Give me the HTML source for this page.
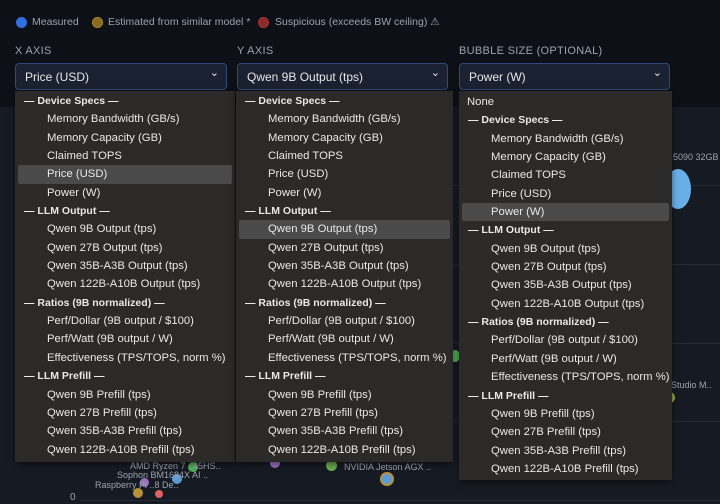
<!DOCTYPE html><html><head><style>
*{margin:0;padding:0;box-sizing:border-box}
body{width:720px;height:504px;background:#0d1117;font-family:"Liberation Sans",sans-serif;color:#e6e6e6;position:relative;overflow:hidden}
.chart{position:absolute;left:0;top:107px;width:720px;height:397px;background:#161b23}
.grid{position:absolute;left:80px;right:0;height:1px;background:#252b35}
.leg{position:absolute;top:16px;font-size:10.5px;color:#9aa3ad}
.dot{position:absolute;width:11px;height:11px;border-radius:50%;top:17px}
.lbl{position:absolute;top:45px;font-size:11px;color:#9aa3ad;letter-spacing:.3px}
.sel{position:absolute;top:63px;height:27px;border:1px solid #2f4a7a;background:#1a2130;border-radius:4px;font-size:12px;color:#e6e6e6;padding:6px 0 0 9px}
.sel:after{content:"⌄";position:absolute;right:7px;top:2px;font-size:11px}
.dd{position:absolute;background:#2b2a29;font-size:11.3px;box-shadow:0 2px 6px rgba(0,0,0,.5)}
.r{height:18.35px;line-height:18.35px;padding-left:32px;white-space:nowrap;color:#e8e8e8}
.h{padding-left:9px;font-weight:bold;font-size:10.5px}
.s{background:#4a4a4a;margin:0 3px;padding-left:29px;border-radius:2px}
.b{position:absolute;border-radius:50%}
.t{position:absolute;font-size:9px;color:#9aa3ad;white-space:nowrap}
</style></head><body>
<div class="chart">
<div class="grid" style="top:78px"></div><div class="grid" style="top:157px"></div><div class="grid" style="top:236px"></div><div class="grid" style="top:314px"></div><div class="grid" style="top:393px"></div>
</div>
<div class="b" style="left:665px;top:169px;width:26px;height:40px;background:#6aaee8"></div>
<div class="t" style="left:673px;top:152px">5090 32GB</div>
<div class="t" style="left:671px;top:380px">Studio M..</div>
<div class="b" style="left:664px;top:392px;width:11px;height:11px;background:#6aa84f;border:1px solid #c8a030"></div>
<div class="b" style="left:450px;top:350px;width:10px;height:12px;background:#4caf50"></div>
<div class="b" style="left:380px;top:472px;width:14px;height:14px;background:#5b9bd5;border:2px solid #b8913a"></div>
<div class="b" style="left:326px;top:460px;width:11px;height:11px;background:#6aa84f"></div>
<div class="b" style="left:270px;top:458px;width:10px;height:10px;background:#9a6fc0"></div>
<div class="b" style="left:188px;top:462px;width:10px;height:10px;background:#4caf50"></div>
<div class="b" style="left:172px;top:474px;width:10px;height:10px;background:#5b9bd5"></div>
<div class="b" style="left:140px;top:478px;width:9px;height:9px;background:#9a6fc0"></div>
<div class="b" style="left:133px;top:488px;width:10px;height:10px;background:#b8913a"></div>
<div class="b" style="left:155px;top:490px;width:8px;height:8px;background:#e06060"></div>
<div class="t" style="left:130px;top:461px">AMD Ryzen 7 ..45HS..</div>
<div class="t" style="left:117px;top:470px">Sophon BM1684X AI ..</div>
<div class="t" style="left:95px;top:480px">Raspberry Pi ..8 De..</div>
<div class="t" style="left:344px;top:462px">NVIDIA Jetson AGX ..</div>
<div class="t" style="left:70px;top:492px;font-size:10px">0</div>

<div class="dot" style="left:16px;background:#2f6fe0"></div><div class="leg" style="left:32px">Measured</div>
<div class="dot" style="left:92px;background:#8a6a1e;border:1px dotted #c9a030"></div><div class="leg" style="left:108px">Estimated from similar model *</div>
<div class="dot" style="left:258px;background:#8a2a2a;border:1px dotted #c04040"></div><div class="leg" style="left:275px">Suspicious (exceeds BW ceiling) ⚠</div>

<div class="lbl" style="left:15px">X AXIS</div>
<div class="lbl" style="left:237px">Y AXIS</div>
<div class="lbl" style="left:459px">BUBBLE SIZE (OPTIONAL)</div>
<div class="sel" style="left:15px;width:212px">Price (USD)</div>
<div class="sel" style="left:237px;width:211px">Qwen 9B Output (tps)</div>
<div class="sel" style="left:459px;width:211px">Power (W)</div>

<div class="dd" style="left:15px;top:91px;width:220px;padding-top:1px;height:371px">
<div class="r h">— Device Specs —</div><div class="r">Memory Bandwidth (GB/s)</div><div class="r">Memory Capacity (GB)</div><div class="r">Claimed TOPS</div><div class="r s">Price (USD)</div><div class="r">Power (W)</div>
<div class="r h">— LLM Output —</div><div class="r">Qwen 9B Output (tps)</div><div class="r">Qwen 27B Output (tps)</div><div class="r">Qwen 35B-A3B Output (tps)</div><div class="r">Qwen 122B-A10B Output (tps)</div>
<div class="r h">— Ratios (9B normalized) —</div><div class="r">Perf/Dollar (9B output / $100)</div><div class="r">Perf/Watt (9B output / W)</div><div class="r">Effectiveness (TPS/TOPS, norm %)</div>
<div class="r h">— LLM Prefill —</div><div class="r">Qwen 9B Prefill (tps)</div><div class="r">Qwen 27B Prefill (tps)</div><div class="r">Qwen 35B-A3B Prefill (tps)</div><div class="r">Qwen 122B-A10B Prefill (tps)</div>
</div>
<div class="dd" style="left:236px;top:91px;width:217px;height:371px;padding-top:1px">
<div class="r h">— Device Specs —</div><div class="r">Memory Bandwidth (GB/s)</div><div class="r">Memory Capacity (GB)</div><div class="r">Claimed TOPS</div><div class="r">Price (USD)</div><div class="r">Power (W)</div>
<div class="r h">— LLM Output —</div><div class="r s">Qwen 9B Output (tps)</div><div class="r">Qwen 27B Output (tps)</div><div class="r">Qwen 35B-A3B Output (tps)</div><div class="r">Qwen 122B-A10B Output (tps)</div>
<div class="r h">— Ratios (9B normalized) —</div><div class="r">Perf/Dollar (9B output / $100)</div><div class="r">Perf/Watt (9B output / W)</div><div class="r">Effectiveness (TPS/TOPS, norm %)</div>
<div class="r h">— LLM Prefill —</div><div class="r">Qwen 9B Prefill (tps)</div><div class="r">Qwen 27B Prefill (tps)</div><div class="r">Qwen 35B-A3B Prefill (tps)</div><div class="r">Qwen 122B-A10B Prefill (tps)</div>
</div>
<div class="dd" style="left:459px;top:91px;width:213px;height:389px;padding-top:2px">
<div class="r" style="padding-left:8px">None</div>
<div class="r h">— Device Specs —</div><div class="r">Memory Bandwidth (GB/s)</div><div class="r">Memory Capacity (GB)</div><div class="r">Claimed TOPS</div><div class="r">Price (USD)</div><div class="r s">Power (W)</div>
<div class="r h">— LLM Output —</div><div class="r">Qwen 9B Output (tps)</div><div class="r">Qwen 27B Output (tps)</div><div class="r">Qwen 35B-A3B Output (tps)</div><div class="r">Qwen 122B-A10B Output (tps)</div>
<div class="r h">— Ratios (9B normalized) —</div><div class="r">Perf/Dollar (9B output / $100)</div><div class="r">Perf/Watt (9B output / W)</div><div class="r">Effectiveness (TPS/TOPS, norm %)</div>
<div class="r h">— LLM Prefill —</div><div class="r">Qwen 9B Prefill (tps)</div><div class="r">Qwen 27B Prefill (tps)</div><div class="r">Qwen 35B-A3B Prefill (tps)</div><div class="r">Qwen 122B-A10B Prefill (tps)</div>
</div>
</body></html>
